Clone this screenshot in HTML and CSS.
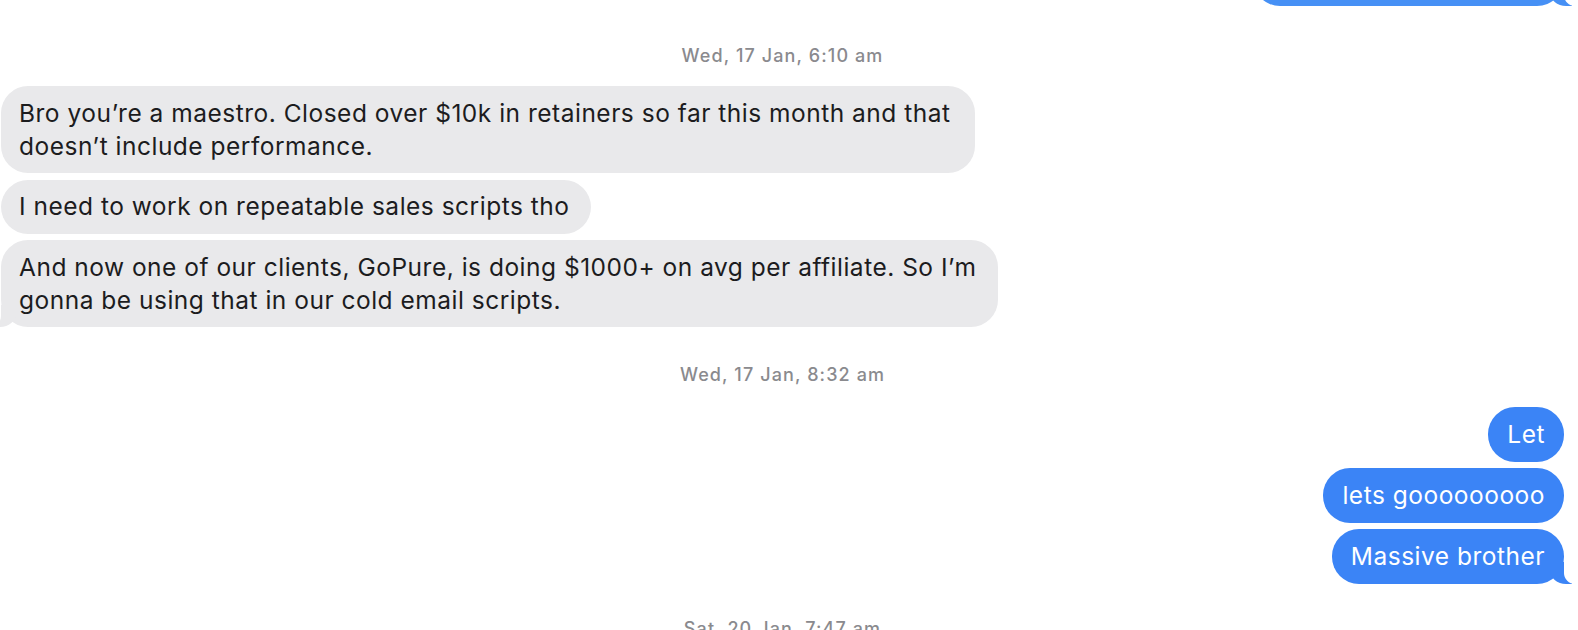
FILE: index.html
```html
<!DOCTYPE html>
<html lang="en">
<head>
<meta charset="utf-8">
<title>Messages</title>
<link rel="stylesheet" href="styles.css">
</head>
<body>
<div class="thread">
  <div class="row row-out">
    <div class="bubble bubble-out bubble-prev tail-out"></div>
  </div>

  <div class="stamp stamp-first"><b>Wed, 17 Jan,</b> 6:10 am</div>

  <div class="group group-in">
    <div class="row row-in">
      <div class="bubble bubble-in bubble-wide">Bro you’re a maestro. Closed over $10k in retainers so far this month and that<br>doesn’t include performance.</div>
    </div>
    <div class="row row-in">
      <div class="bubble bubble-in">I need to work on repeatable sales scripts tho</div>
    </div>
    <div class="row row-in">
      <div class="bubble bubble-in tail-in">And now one of our clients, GoPure, is doing $1000+ on avg per affiliate. So I’m<br>gonna be using that in our cold email scripts.</div>
    </div>
  </div>

  <div class="stamp"><b>Wed, 17 Jan,</b> 8:32 am</div>

  <div class="group group-out">
    <div class="row row-out">
      <div class="bubble bubble-out">Let</div>
    </div>
    <div class="row row-out">
      <div class="bubble bubble-out">lets gooooooooo</div>
    </div>
    <div class="row row-out">
      <div class="bubble bubble-out tail-out">Massive brother</div>
    </div>
  </div>

  <div class="stamp stamp-last"><b>Sat, 20 Jan,</b> 7:47 am</div>
</div>
</body>
</html>
```

FILE: styles.css
```css
* {
  box-sizing: border-box;
}

html, body {
  margin: 0;
  padding: 0;
  background: #ffffff;
  overflow: hidden;
}

body {
  width: 1578px;
  height: 630px;
  font-family: Inter, "Liberation Sans", "Noto Sans", sans-serif;
}

.thread {
  width: 1564px;
  padding-left: 1px;
  display: flex;
  flex-direction: column;
}

.row {
  display: flex;
}

.row-in {
  justify-content: flex-start;
}

.row-out {
  justify-content: flex-end;
}

.group {
  display: flex;
  flex-direction: column;
}

.group-in {
  gap: 6.5px;
}

.group-out {
  gap: 6px;
}

.bubble {
  position: relative;
  font-size: 24.5px;
  line-height: 33px;
  padding: 10.5px 22px 10.5px 18px;
  border-radius: 27px;
  white-space: nowrap;
  letter-spacing: 0.5px;
}

.bubble-wide {
  padding-right: 25px;
}

.bubble-in {
  background: #e9e9eb;
  color: #1c1c1e;
}

.bubble-out {
  background: #3b84f6;
  color: #ffffff;
  padding: 11px 19px;
}

.bubble-prev {
  width: 311px;
  height: 55px;
  margin-top: -49px;
  background: #4690f5;
}

.stamp {
  text-align: center;
  font-size: 18px;
  line-height: 20px;
  color: #8a8a8e;
  font-weight: 500;
  letter-spacing: 1.1px;
  margin: 38px 0 21.5px;
}

.stamp b {
  font-weight: 500;
}

.stamp-first {
  margin: 39.5px 0 20.5px;
}

.stamp-last {
  margin-top: 35px;
}

/* tails */
.tail-out::before,
.tail-out::after,
.tail-in::before,
.tail-in::after {
  content: "";
  position: absolute;
  bottom: 0;
  height: 22px;
}

.tail-out::before {
  right: -8px;
  width: 22px;
  background: inherit;
  border-bottom-left-radius: 16px 14px;
}

.tail-out::after {
  right: -24px;
  width: 24px;
  background: #ffffff;
  border-bottom-left-radius: 11px;
}

.tail-in::before {
  left: -7px;
  width: 22px;
  background: #e9e9eb;
  border-bottom-right-radius: 16px 14px;
}

.tail-in::after {
  left: -24px;
  width: 24px;
  background: #ffffff;
  border-bottom-right-radius: 11px;
}
```
